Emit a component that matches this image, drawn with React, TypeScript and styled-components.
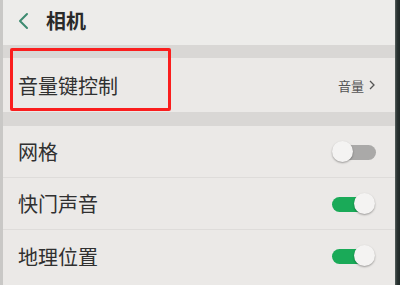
import React from "react";
import styled, { createGlobalStyle } from "styled-components";

const Global = createGlobalStyle`
  html, body { margin: 0; padding: 0; background: #ebe9e7; }
  body { font-family: "Noto Sans CJK SC", "Noto Sans", sans-serif; }
`;

const Frame = styled.div`
  display: flex;
  width: 400px;
  height: 285px;
  overflow: hidden;
`;

const LeftEdge = styled.div`
  width: 3px;
  background: #c9c8c6;
`;

const RightEdge = styled.div`
  width: 5px;
  background: linear-gradient(90deg, #56605e 0, #2a3332 40%, #1f2827 100%);
`;

const Screen = styled.div`
  flex: 1;
  display: flex;
  flex-direction: column;
  background: #ebe9e7;
  color: #2f2f2f;
`;

const Header = styled.div`
  height: 45px;
  display: flex;
  align-items: center;
  padding-left: 14px;
  gap: 17px;
  background: #edecea;
  box-sizing: border-box;
  padding-bottom: 4px;
`;

const Title = styled.div`
  font-size: 20px;
  font-weight: 700;
  color: #2a2a2a;
`;

const Band = styled.div<{ $h: number }>`
  height: ${(p) => p.$h}px;
  background: #d9d7d5;
`;

const Row = styled.div<{ $h: number; $divider?: boolean }>`
  position: relative;
  height: ${(p) => p.$h}px;
  display: flex;
  align-items: center;
  justify-content: space-between;
  padding: 0 19px 0 15px;
  box-sizing: border-box;
  border-bottom: ${(p) => (p.$divider ? "1px solid #dedcda" : "none")};
`;

const Label = styled.div`
  font-size: 20px;
  color: #303030;
`;

const Value = styled.div`
  display: flex;
  align-items: center;
  gap: 5px;
  font-size: 13px;
  color: #555;
  padding-right: 1px;
`;

const Highlight = styled.div`
  position: absolute;
  left: 7px;
  top: -10px;
  width: 161px;
  height: 63px;
  border: 3px solid #fa1e1e;
  border-radius: 2px;
  box-sizing: border-box;
  pointer-events: none;
`;

const Switch = styled.div`
  position: relative;
  width: 44px;
  height: 22px;
`;

const Track = styled.div<{ $on: boolean }>`
  position: absolute;
  top: 4px;
  height: 15px;
  border-radius: 8px;
  left: ${(p) => (p.$on ? "0" : "6px")};
  right: ${(p) => (p.$on ? "8px" : "0")};
  background: ${(p) => (p.$on ? "#1aaa58" : "#aaa9a8")};
`;

const Knob = styled.div<{ $on: boolean }>`
  position: absolute;
  top: 0;
  left: ${(p) => (p.$on ? "22px" : "0")};
  width: 21px;
  height: 21px;
  border-radius: 50%;
  background: #f4f3f2;
  box-shadow: 0 1px 2px rgba(0, 0, 0, 0.35);
`;

const Toggle = ({ on }: { on: boolean }) => (
  <Switch>
    <Track $on={on} />
    <Knob $on={on} />
  </Switch>
);

const Back = () => (
  <svg width="12" height="18" viewBox="0 0 12 18">
    <path d="M10 2 L3 9 L10 16" fill="none" stroke="#3d8a70" strokeWidth="2" strokeLinecap="round" strokeLinejoin="round" />
  </svg>
);

const Chevron = () => (
  <svg width="6" height="10" viewBox="0 0 6 10">
    <path d="M1 1 L5 5 L1 9" fill="none" stroke="#555" strokeWidth="1.3" />
  </svg>
);

export default function App() {
  return (
    <>
      <Global />
      <Frame>
        <LeftEdge />
        <Screen>
          <Header>
            <Back />
            <Title>相机</Title>
          </Header>
          <Band $h={13} />
          <Row $h={54}>
            <Label>音量键控制</Label>
            <Value>
              音量
              <Chevron />
            </Value>
            <Highlight />
          </Row>
          <Band $h={14} />
          <Row $h={52} $divider>
            <Label>网格</Label>
            <Toggle on={false} />
          </Row>
          <Row $h={52} $divider>
            <Label>快门声音</Label>
            <Toggle on />
          </Row>
          <Row $h={52}>
            <Label>地理位置</Label>
            <Toggle on />
          </Row>
        </Screen>
        <RightEdge />
      </Frame>
    </>
  );
}
